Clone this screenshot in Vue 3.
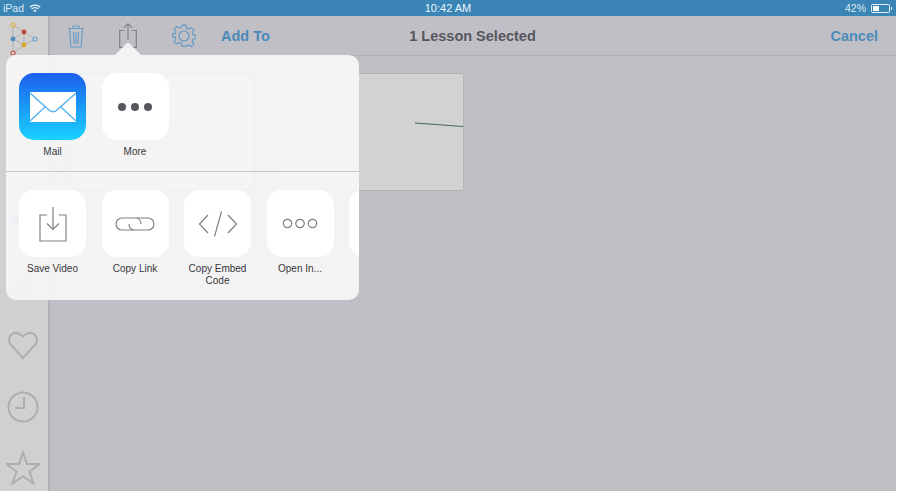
<template>
  <div class="screen">
    <div class="status-bar">
      <div class="status-left">
        <span>iPad</span>
        <svg width="12" height="9" viewBox="0 0 12 9" fill="none" stroke="#e8f2f8" stroke-width="1.3">
          <path d="M.8 3.2a7.4 7.4 0 0 1 10.4 0M2.6 5a4.8 4.8 0 0 1 6.8 0" />
          <path d="M4.3 6.6a2.4 2.4 0 0 1 3.4 0L6 8.3z" fill="#e8f2f8" stroke="none" />
        </svg>
      </div>
      <span class="status-time">10:42 AM</span>
      <div class="status-right">
        <span>42%</span>
        <div class="battery"><div class="battery-level" :style="{ width: batteryLevel + '%' }"></div></div>
      </div>
    </div>

    <div class="body">
      <aside class="sidebar">
        <div class="logo">
          <svg width="48" height="39" viewBox="0 0 48 39" fill="none">
            <path d="M13 9 24 16 35 23 24 29 13 37M13 9V37M13 23 24 16M13 23 24 29M24 16V29" stroke="#aeaeb2" stroke-width="1" />
            <circle cx="13" cy="9" r="2" fill="#d2d0c8" stroke="#dcb441" stroke-width="1.2" />
            <circle cx="24" cy="16" r="2.4" fill="#c8403a" />
            <circle cx="13" cy="23" r="2.4" fill="#4a90c4" />
            <circle cx="35" cy="23" r="2" fill="#d2d2d4" stroke="#6aa5cf" stroke-width="1.2" />
            <circle cx="24" cy="29" r="2.4" fill="#dba52f" />
            <circle cx="13" cy="37" r="2" fill="#d2d0d0" stroke="#c8544c" stroke-width="1.2" />
          </svg>
        </div>
        <nav class="side-nav">
          <svg class="nav-icon" viewBox="0 0 34 34"><path d="M13 9l-9 8 9 8 3-8z" fill="#5aa8e0" stroke="none" /></svg>
          <svg class="nav-icon" viewBox="0 0 34 34"><circle cx="11" cy="13" r="5" fill="#b4b4b8" stroke="none" /><circle cx="23" cy="13" r="5" fill="#b4b4b8" stroke="none" /><path d="M3 28c0-12 28-12 28 0z" fill="#b4b4b8" stroke="none" /></svg>
          <svg class="nav-icon" viewBox="0 0 34 34"><path d="M17 30 4.500 16.500C-.5 9 8 0 17 8.500 26 0 34.500 9 29.500 16.500z" /></svg>
          <svg class="nav-icon" viewBox="0 0 34 34"><circle cx="17" cy="17" r="14.500" /><path d="M18 7v11H9" /></svg>
          <svg class="nav-icon" viewBox="0 0 34 34"><path d="M17 1.500 21 13H33.500L23.500 20.500 27.500 32.500 17 25.200 6.500 32.500 10.500 20.500 .5 13H13z" /></svg>
        </nav>
      </aside>

      <div class="content">
        <header class="toolbar">
          <div class="toolbar-side">
            <svg class="tool-icon trash" width="18" height="24" viewBox="0 0 18 24">
              <path d="M1 4.500h16M6 4.500V2h6v2.500M2.500 4.500 4 23h10l1.500-18.500M6.500 8l.5 12M9 8v12M11.500 8l-.5 12" />
            </svg>
            <svg class="tool-icon share" width="18" height="25" viewBox="0 0 18 25">
              <path d="M5.500 7.500H.7v16.800h16.600V7.500h-4.800M9 17V1M5 4.500 9 .8l4 3.700" />
            </svg>
            <svg class="tool-icon gear" width="24" height="24" viewBox="0 0 24 24">
              <path d="M10 1h4l.7 3.300 2 .8 2.800-1.800 2.800 2.800-1.800 2.800.8 2 3.300.7v3.400l-3.300.7-.8 2 1.800 2.800-2.800 2.800-2.800-1.800-2 .8L14 23h-4l-.7-3.300-2-.8-2.800 1.800-2.800-2.800 1.800-2.800-.8-2L0 13.700v-3.400l2.700-.7.800-2L1.700 5.100l2.800-2.800 2.800 1.800 2-.8z" transform="translate(.5 .2) scale(.96)" />
              <circle cx="12" cy="12" r="5" />
            </svg>
            <span class="toolbar-link">Add To</span>
          </div>
          <h1 class="toolbar-title">1 Lesson Selected</h1>
          <div class="toolbar-side toolbar-right">
            <span class="toolbar-link">Cancel</span>
          </div>
        </header>

        <main class="lessons">
          <div class="lesson selected"></div>
          <div class="lesson">
            <span class="handwriting">This is</span>
            <svg class="stroke" width="50" height="6" viewBox="0 0 50 6">
              <path d="M0 1 48 4.500" stroke="#4a6660" stroke-width="1" fill="none" />
            </svg>
          </div>
        </main>
      </div>
    </div>

    <div class="popover">
      <div class="arrow"></div>
      <div class="sheet">
        <div class="share-row first">
          <div class="share-item" v-for="item in apps" :key="item.label">
            <div class="tile" :class="{ mail: item.mail }">
              <svg v-if="item.mail" width="46" height="30" viewBox="0 0 46 30">
                <rect width="46" height="30" fill="#fff" />
                <path d="M0 1 19 18q4 3.500 8 0L46 1M0 29 15 15M46 29 31 15" fill="none" stroke="#5ab4ee" stroke-width="1.500" />
              </svg>
              <svg v-else width="40" height="10" viewBox="0 0 40 10">
                <circle cx="7" cy="5" r="4" fill="#56565c" />
                <circle cx="20" cy="5" r="4" fill="#56565c" />
                <circle cx="33" cy="5" r="4" fill="#56565c" />
              </svg>
            </div>
            <span class="share-label">{{ item.label }}</span>
          </div>
        </div>
        <div class="share-row second">
          <div class="share-item">
            <div class="tile">
              <svg class="action" width="28" height="36" viewBox="0 0 28 36">
                <path d="M8 9H1v26h26V9h-7M14 1v22M8 17.500l6 6 6-6" />
              </svg>
            </div>
            <span class="share-label">Save Video</span>
          </div>
          <div class="share-item">
            <div class="tile">
              <svg class="action" width="40" height="14" viewBox="0 0 40 14">
                <path d="M20 1H7a6 6 0 0 0 0 12h13c-3.500 0-6-2.500-6-6M20 13h13a6 6 0 0 0 0-12H20c3.500 0 6 2.500 6 6" />
              </svg>
            </div>
            <span class="share-label">Copy Link</span>
          </div>
          <div class="share-item">
            <div class="tile">
              <svg class="action" width="40" height="26" viewBox="0 0 40 26">
                <path d="M10 4 1.500 13 10 22M30 4l8.500 9L30 22M23.500 .5 16.500 25.500" />
              </svg>
            </div>
            <span class="share-label">Copy Embed Code</span>
          </div>
          <div class="share-item">
            <div class="tile">
              <svg class="action" width="36" height="11" viewBox="0 0 36 11">
                <circle cx="5.500" cy="5.500" r="4.200" />
                <circle cx="18" cy="5.500" r="4.200" />
                <circle cx="30.500" cy="5.500" r="4.200" />
              </svg>
            </div>
            <span class="share-label">Open In...</span>
          </div>
          <div class="share-item">
            <div class="tile"></div>
          </div>
        </div>
      </div>
    </div>
  </div>
</template>

<script setup>
const batteryLevel = 42

const apps = [
  { label: 'Mail', mail: true },
  { label: 'More', mail: false }
]
</script>

<style scoped>
.screen {
  position: relative;
  width: 896px;
  height: 491px;
  display: flex;
  flex-direction: column;
  overflow: hidden;
  font-family: "Liberation Sans", Arial, sans-serif;
  background: #bfbec5;
}

.status-bar {
  height: 16px;
  flex-shrink: 0;
  display: flex;
  align-items: center;
  justify-content: space-between;
  position: relative;
  padding: 0 6px 0 3px;
  background: #3a84b6;
  color: #dcebf4;
  font-size: 10.5px;
}

.status-left,
.status-right {
  display: flex;
  align-items: center;
  gap: 5px;
}

.status-time {
  position: absolute;
  left: 0;
  right: 0;
  text-align: center;
  color: #f0f6fa;
  font-size: 11px;
}

.battery {
  position: relative;
  width: 19px;
  height: 9px;
  border: 1px solid #e8f2f8;
  border-radius: 1.5px;
  box-sizing: border-box;
  padding: 1px;
}

.battery::after {
  content: "";
  position: absolute;
  right: -3px;
  top: 2px;
  width: 1.5px;
  height: 3px;
  background: #e8f2f8;
}

.battery-level {
  height: 100%;
  background: #f4f8fb;
}

.body {
  flex: 1;
  display: flex;
  min-height: 0;
}

.sidebar {
  width: 48px;
  flex-shrink: 0;
  background: #d0d0d1;
  border-right: 2px solid #b0b0b6;
}

.logo {
  height: 39px;
}

.logo svg {
  display: block;
}

.side-nav {
  display: flex;
  flex-direction: column;
  align-items: center;
  gap: 27.5px;
  padding-top: 150px;
  margin-left: -2px;
}

.nav-icon {
  width: 34px;
  height: 34px;
  flex-shrink: 0;
  fill: none;
  stroke: #aeaeb2;
  stroke-width: 2;
}

.content {
  flex: 1;
  display: flex;
  flex-direction: column;
  min-width: 0;
}

.toolbar {
  height: 40px;
  flex-shrink: 0;
  display: flex;
  align-items: center;
  box-sizing: border-box;
  border-bottom: 1px solid #aeaeb3;
  background: #c1bfc6;
}

.toolbar-side {
  flex: 1;
  display: flex;
  align-items: center;
  padding-left: 17px;
}

.toolbar-right {
  justify-content: flex-end;
  padding: 0 18px 0 0;
}

.toolbar-title {
  margin: 0;
  font-size: 14.5px;
  font-weight: 700;
  color: #56565e;
}

.toolbar-link {
  font-size: 14.5px;
  font-weight: 700;
  color: #4a8bb9;
}

.tool-icon {
  fill: none;
  flex-shrink: 0;
  stroke-width: 1.2;
}

.trash {
  stroke: #6a9fc6;
  margin-right: 34px;
}

.share {
  stroke: #808086;
  margin-right: 35px;
}

.gear {
  stroke: #5f9ac4;
  margin-right: 25px;
}

.lessons {
  flex: 1;
  display: flex;
  gap: 19px;
  align-items: flex-start;
  padding: 17px 19px;
}

.lesson {
  position: relative;
  width: 189px;
  height: 118px;
  box-sizing: border-box;
  background: #d2d2d3;
  border: 1px solid #b3b3b9;
  overflow: hidden;
}

.lesson.selected {
  width: 187px;
  border: 2px solid #5aaee8;
}

.handwriting {
  position: absolute;
  left: 14px;
  top: 17px;
  font-family: "Liberation Serif", serif;
  font-style: italic;
  font-size: 24px;
  color: #aaaaae;
}

.stroke {
  position: absolute;
  left: 139px;
  top: 48px;
}

.popover {
  position: absolute;
  left: 6px;
  top: 55px;
  width: 353px;
}

.arrow {
  position: absolute;
  left: 109px;
  top: -12px;
  width: 26px;
  height: 12px;
  background: rgba(245, 245, 247, 0.95);
  clip-path: polygon(50% 0, 58% 8%, 100% 100%, 0 100%, 42% 8%);
}

.sheet {
  height: 245px;
  border-radius: 10px;
  overflow: hidden;
  background: rgba(245, 245, 247, 0.95);
  display: flex;
  flex-direction: column;
}

.share-row {
  display: flex;
  gap: 15.5px;
  padding-left: 13px;
}

.share-row.first {
  height: 117px;
  flex-shrink: 0;
  box-sizing: border-box;
  padding-top: 18px;
  border-bottom: 1px solid #c8c8cc;
}

.share-row.second {
  padding-top: 18px;
}

.share-item {
  width: 67px;
  flex-shrink: 0;
  display: flex;
  flex-direction: column;
  align-items: center;
}

.tile {
  width: 67px;
  height: 67px;
  flex-shrink: 0;
  border-radius: 15px;
  background: #fff;
  display: flex;
  align-items: center;
  justify-content: center;
}

.tile.mail {
  background: linear-gradient(#1c5fee, #1ad2fd);
}

.action {
  fill: none;
  stroke: #808084;
  stroke-width: 1.2;
}

.share-label {
  margin-top: 5.5px;
  font-size: 10px;
  line-height: 12px;
  color: #37373a;
  text-align: center;
}
</style>

<style>
html,
body {
  background: #fff;
}
</style>
